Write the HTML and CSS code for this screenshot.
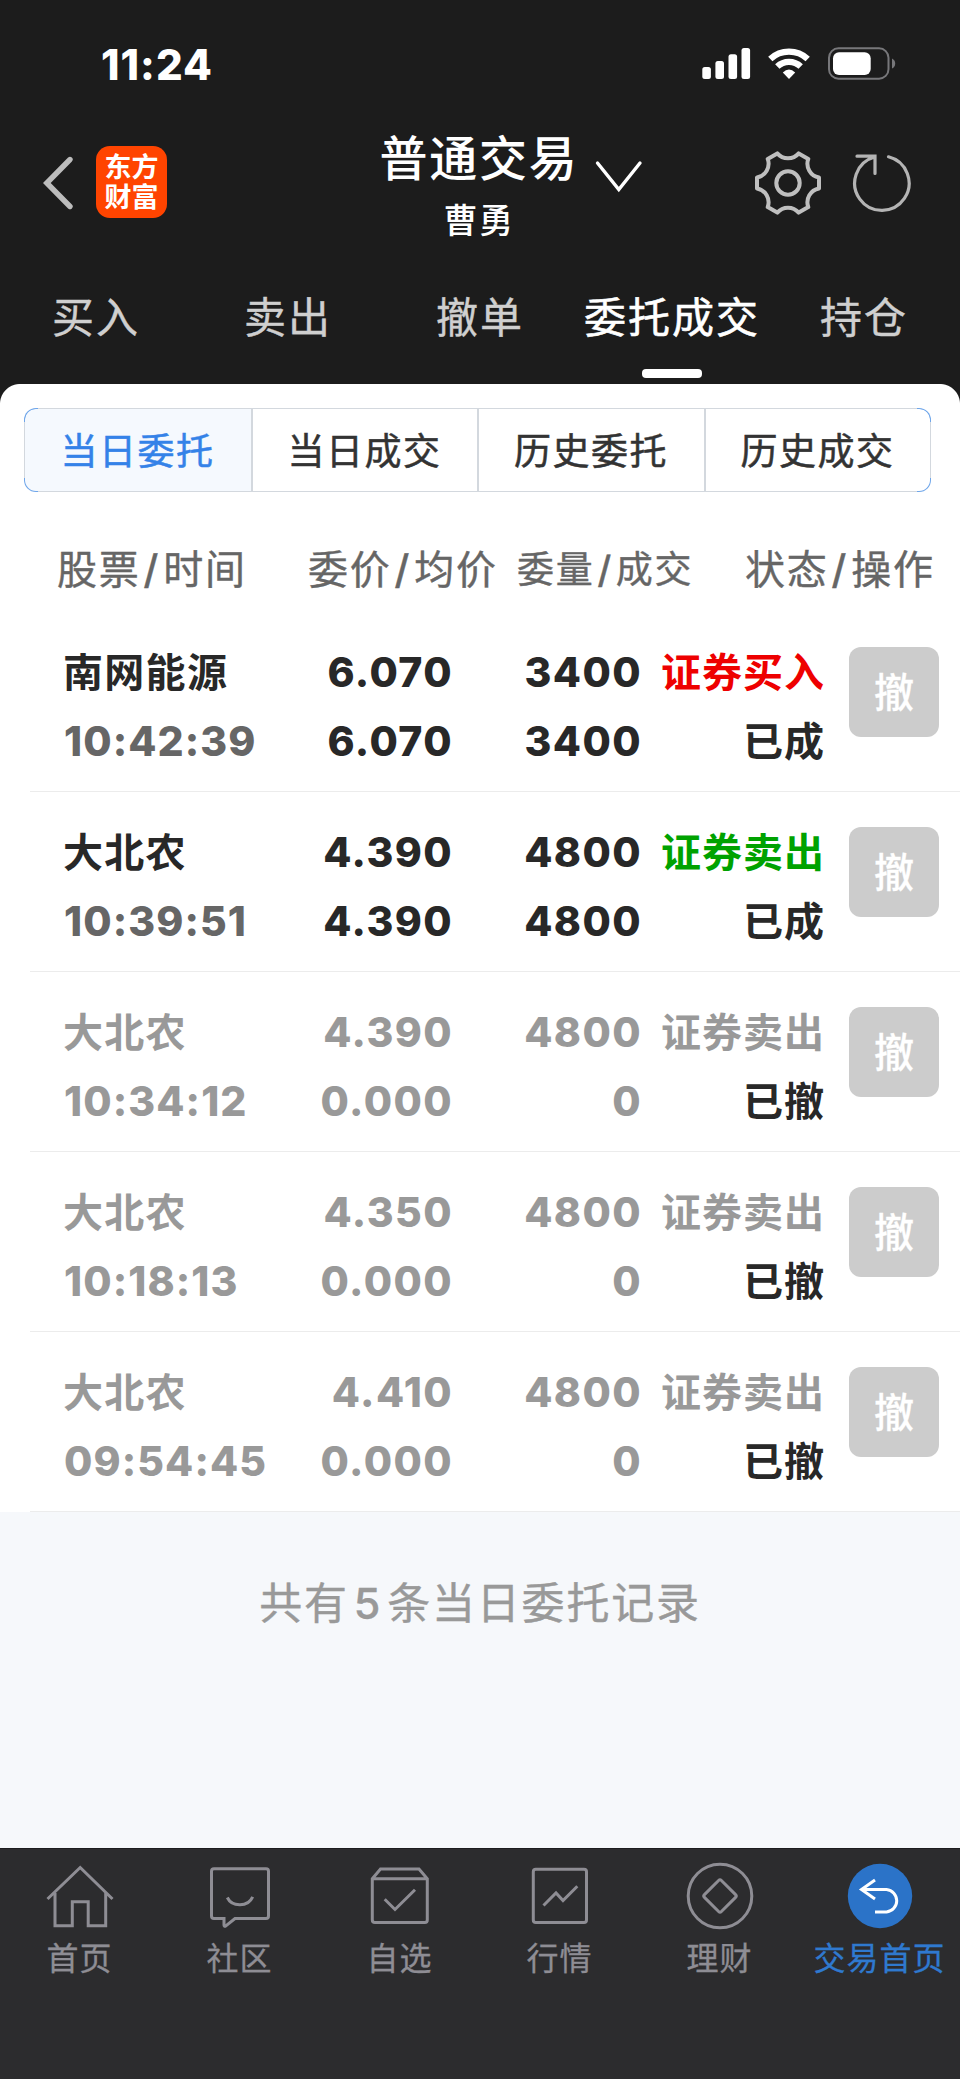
FILE: index.html
```html
<!DOCTYPE html>
<html lang="zh-CN">
<head>
<meta charset="utf-8">
<title>普通交易</title>
<link rel="stylesheet" href="styles.css">
</head>
<body>
<div class="app">
  <header class="top">
    <div class="status">
      <span class="clock">11:24</span>
      <svg class="status-icons" width="200" height="40" viewBox="700 43 200 40">
        <g fill="#fff">
          <rect x="702.3" y="67" width="8.6" height="12" rx="2.5"/>
          <rect x="715.4" y="61" width="8.6" height="18" rx="2.5"/>
          <rect x="728.5" y="54.300" width="8.600" height="24.700" rx="2.5"/>
          <rect x="741.500" y="48" width="8.600" height="31" rx="2.5"/>
          <path d="M782.800 72.600Q789 66.300 795.200 72.600L789 79Z"/>
          <rect x="833" y="52.300" width="37.700" height="22.600" rx="6"/>
        </g>
        <path d="M770.300 59A27.500 27.500 0 0 1 807.700 59M777.300 66.500A17 17 0 0 1 800.700 66.500" fill="none" stroke="#fff" stroke-width="6.300"/>
        <rect x="829" y="48.300" width="59.500" height="30.400" rx="9.500" fill="none" stroke="#77777a" stroke-width="2"/>
        <path d="M892 58.500Q895.200 60 895.200 63.500Q895.200 67 892 68.500Z" fill="#77777a"/>
      </svg>
    </div>
    <div class="titlebar">
      <svg class="back" width="32" height="60" viewBox="42 153 32 60"><path d="M70 159.500L46.800 183L70 206.500" fill="none" stroke="#bcbcbc" stroke-width="5.400" stroke-linecap="round"/></svg>
      <div class="logo"><span>东方</span><span>财富</span></div>
      <div class="titles">
        <div class="title">普通交易</div>
        <div class="user">曹勇</div>
      </div>
      <svg class="down" width="50" height="34" viewBox="594 160 50 34"><path d="M597.500 163L618.800 189.500L640 163" fill="none" stroke="#fff" stroke-width="3.400" stroke-linecap="round"/></svg>
      <svg class="gear" width="70" height="70" viewBox="-35 -35 70 70"><g fill="none" stroke="#bfbfbf" stroke-width="4" stroke-linejoin="round"><path d="M31 -5.500L31 5.500A14 14 0 0 0 20.300 24.100L10.700 29.600A14 14 0 0 0 -10.700 29.600L-20.300 24.100A14 14 0 0 0 -31 5.500L-31 -5.500A14 14 0 0 0 -20.300 -24.100L-10.700 -29.600A14 14 0 0 0 10.700 -29.600L20.300 -24.100A14 14 0 0 0 31 -5.500Z"/><circle r="11.700"/></g></svg>
      <svg class="refresh" width="64" height="64" viewBox="850 151 64 64"><path d="M888.500 156.800A27.200 27.200 0 1 1 874.500 157M857 156.200H875V173.500" fill="none" stroke="#b4b4b4" stroke-width="3.200" stroke-linecap="round"/></svg>
    </div>
    <nav class="tabs">
      <span class="tab">买入</span>
      <span class="tab">卖出</span>
      <span class="tab">撤单</span>
      <span class="tab tab-on">委托成交</span>
      <span class="tab">持仓</span>
    </nav>
  </header>
  <main class="panel">
    <div class="segments">
      <span class="seg seg-on">当日委托</span>
      <span class="seg">当日成交</span>
      <span class="seg">历史委托</span>
      <span class="seg">历史成交</span>
    </div>
    <div class="head">
      <span class="h-name">股票<i>/</i>时间</span>
      <span class="h-price">委价<i>/</i>均价</span>
      <span class="h-qty">委量<i>/</i>成交</span>
      <span class="h-state">状态<i>/</i>操作</span>
    </div>
    <div class="row">
      <div class="name"><b>南网能源</b><time>10:42:39</time></div>
      <div class="num"><b>6.070</b><b>6.070</b></div>
      <div class="num"><b>3400</b><b>3400</b></div>
      <div class="state"><b class="buy">证券买入</b><b>已成</b></div>
      <span class="cancel">撤</span>
    </div>
    <div class="row">
      <div class="name"><b>大北农</b><time>10:39:51</time></div>
      <div class="num"><b>4.390</b><b>4.390</b></div>
      <div class="num"><b>4800</b><b>4800</b></div>
      <div class="state"><b class="sell">证券卖出</b><b>已成</b></div>
      <span class="cancel">撤</span>
    </div>
    <div class="row row-off">
      <div class="name"><b>大北农</b><time>10:34:12</time></div>
      <div class="num"><b>4.390</b><b>0.000</b></div>
      <div class="num"><b>4800</b><b>0</b></div>
      <div class="state"><b class="off">证券卖出</b><b>已撤</b></div>
      <span class="cancel">撤</span>
    </div>
    <div class="row row-off">
      <div class="name"><b>大北农</b><time>10:18:13</time></div>
      <div class="num"><b>4.350</b><b>0.000</b></div>
      <div class="num"><b>4800</b><b>0</b></div>
      <div class="state"><b class="off">证券卖出</b><b>已撤</b></div>
      <span class="cancel">撤</span>
    </div>
    <div class="row row-off">
      <div class="name"><b>大北农</b><time>09:54:45</time></div>
      <div class="num"><b>4.410</b><b>0.000</b></div>
      <div class="num"><b>4800</b><b>0</b></div>
      <div class="state"><b class="off">证券卖出</b><b>已撤</b></div>
      <span class="cancel">撤</span>
    </div>
  </main>
  <p class="summary">共有<i>5</i>条当日委托记录</p>
  <nav class="dock">
    <div class="item">
      <svg width="80" height="74" viewBox="40 1859 80 74"><path d="M47.500 1899L80.200 1867.500L112.500 1899M55 1893V1925.700H72.300V1901.700H88.200V1925.700H105.700V1893"/></svg>
      <span>首页</span>
    </div>
    <div class="item">
      <svg width="80" height="74" viewBox="200 1859 80 74"><path d="M214 1868.800H266Q268.500 1868.800 268.500 1871.300V1916Q268.500 1918.500 266 1918.500H235L225.500 1926.200Q224 1926.500 224 1925V1918.500H214Q211.500 1918.500 211.500 1916V1871.300Q211.500 1868.800 214 1868.800ZM227.300 1897.500C232 1907.300 248 1907.300 252.700 1896.800"/></svg>
      <span>社区</span>
    </div>
    <div class="item">
      <svg width="80" height="74" viewBox="360 1859 80 74"><path d="M372.300 1878.700L380.500 1869H419L427.300 1878.700V1920Q427.300 1922.500 424.800 1922.500H375Q372.300 1922.500 372.300 1920ZM372.300 1878.700H427.300M384.700 1899.300L395 1909.500L415 1889.700"/></svg>
      <span>自选</span>
    </div>
    <div class="item">
      <svg width="80" height="74" viewBox="520 1859 80 74"><rect x="533.300" y="1869.300" width="53.200" height="53.200" rx="2.500"/><path d="M543.500 1905.500L556 1893L563 1900.500L577.300 1886.300"/></svg>
      <span>行情</span>
    </div>
    <div class="item">
      <svg width="80" height="74" viewBox="680 1859 80 74"><circle cx="720" cy="1896" r="31.800"/><rect x="708" y="1884" width="24" height="24" rx="2" transform="rotate(45 720 1896)"/></svg>
      <span>理财</span>
    </div>
    <div class="item item-on">
      <svg width="80" height="74" viewBox="840 1859 80 74"><circle class="disc" cx="880" cy="1896" r="32.200"/><path d="M875 1880L861.500 1889.500L875 1899M861.500 1889.500H886.500A11.300 11.300 0 0 1 886.500 1912H875"/></svg>
      <span>交易首页</span>
    </div>
  </nav>
</div>
</body>
</html>
```
FILE: styles.css
```css
* { box-sizing: border-box; }
body {
  margin: 0;
  background: #1c1c1c;
  font-family: Inter, "Noto Sans CJK SC", sans-serif;
}
i { font-style: normal; }
svg { display: block; flex: none; }
.app {
  width: 960px;
  height: 2079px;
  display: flex;
  flex-direction: column;
  background: #f6f8fb;
  overflow: hidden;
}
.top { height: 384px; background: #1c1c1c; color: #fff; }

.status {
  height: 126px;
  padding: 43px 60px 0 101px;
  display: flex;
  justify-content: space-between;
}
.clock { font-size: 42px; font-weight: 800; line-height: 43px; letter-spacing: 1px; font-optical-sizing: none; }

.titlebar {
  height: 132px;
  display: flex;
  align-items: flex-start;
}
.back { margin: 27px 22px 0 42px; }
.logo {
  width: 71px;
  height: 72px;
  margin-top: 20px;
  padding-top: 7px;
  border-radius: 14px;
  background: #ff4400;
  display: flex;
  flex-direction: column;
  align-items: center;
  font-size: 27px;
  font-weight: 700;
  line-height: 30px;
}
.titles {
  width: 200px;
  margin-left: 212px;
  display: flex;
  flex-direction: column;
  align-items: center;
  white-space: nowrap;
}
.title { font-size: 48px; font-weight: 500; line-height: 66px; letter-spacing: 1.800px; }
.user { padding-top: 1px; font-size: 34px; font-weight: 500; line-height: 56px; letter-spacing: 1.500px; }
.down { margin: 34px 0 0 15px; }
.gear { margin: 22px 0 0 109px; }
.refresh { margin: 25px 0 0 27px; }

.tabs { height: 126px; display: flex; }
.tab {
  width: 192px;
  text-align: center;
  font-size: 42px;
  line-height: 120px;
  letter-spacing: 2px;
  color: #cfcfcf;
  -webkit-text-stroke: 0.4px;
}
.tab-on { color: #fff; -webkit-text-stroke: 0.6px; }
.tab-on::after {
  content: "";
  display: block;
  width: 60px;
  height: 9px;
  margin: -9px auto 0;
  border-radius: 4px;
  background: #fff;
}

.panel {
  height: 1128px;
  background:
    radial-gradient(circle at 20px 20px, #fff 19.500px, #1c1c1c 20.500px) 0 0 / 20px 20px no-repeat,
    radial-gradient(circle at 0 20px, #fff 19.500px, #1c1c1c 20.500px) 100% 0 / 20px 20px no-repeat,
    #fff;
  padding-top: 24px;
}
/* grey outline with blue corners */
.segments {
  height: 84px;
  margin: 0 29px 0 24px;
  border: 1.500px solid transparent;
  border-radius: 12px;
  display: grid;
  grid-template-columns: 226px 226px 227px 1fr;
  overflow: hidden;
  background:
    radial-gradient(circle at 0 0, #6fa6ea 14px, transparent 14px) 0 0 / 14px 14px no-repeat border-box,
    radial-gradient(circle at 100% 0, #6fa6ea 14px, transparent 14px) 100% 0 / 14px 14px no-repeat border-box,
    radial-gradient(circle at 0 100%, #6fa6ea 14px, transparent 14px) 0 100% / 14px 14px no-repeat border-box,
    radial-gradient(circle at 100% 100%, #6fa6ea 14px, transparent 14px) 100% 100% / 14px 14px no-repeat border-box,
    linear-gradient(#d3d8de, #d3d8de) border-box;
}
.seg {
  padding-right: 1px;
  background: #fff;
  text-align: center;
  font-size: 37px;
  line-height: 85px;
  letter-spacing: 1.500px;
  color: #333;
  border-left: 2px solid #d3d8de;
  -webkit-text-stroke: 0.5px;
}
.seg-on { color: #3482e8; background: #f5f9fe; border-left: 0; border-radius: 10px 0 0 10px; }
.seg:last-child { border-radius: 0 10px 10px 0; }

.head {
  height: 120px;
  padding-top: 41px;
  display: grid;
  grid-template-columns: 308px 209px 228px 1fr;
  font-size: 40px;
  line-height: 74px;
  letter-spacing: 1.800px;
  color: #666;
  white-space: nowrap;
  -webkit-text-stroke: 0.4px;
}
.head i { margin: 0 3px; font-weight: 500; }
.h-name { padding-left: 57px; }
.h-qty { font-size: 37px; letter-spacing: 1.700px; }

.row {
  height: 180px;
  margin-left: 30px;
  padding: 26px 21px 0 33px;
  border-bottom: 1px solid #ececec;
  display: grid;
  grid-template-columns: 231px 159px 189px 183px 90px;
  font-size: 40px;
  line-height: 69px;
  letter-spacing: 1.300px;
  color: #282828;
  white-space: nowrap;
}
.row b, .row time { display: block; font-weight: 700; }
.row time { padding-left: 1px; font-size: 41px; font-weight: 800; color: #666; letter-spacing: 1.100px; font-optical-sizing: none; }
.num { text-align: right; font-size: 41px; letter-spacing: 1.400px; font-optical-sizing: none; }
.num b { font-weight: 800; }
.state { text-align: right; letter-spacing: 1px; }
.buy { color: #ee0000; }
.sell { color: #00a200; }
.row-off .name, .row-off .num, .row-off time, .off { color: #999; }
.cancel {
  width: 90px;
  height: 90px;
  margin: 9px 0 0 24px;
  border-radius: 12px;
  background: #ccc;
  color: #fff;
  text-align: center;
  font-size: 40px;
  font-weight: 500;
  line-height: 92px;
  letter-spacing: 0;
  -webkit-text-stroke: 0.3px;
}

.summary {
  margin: 0;
  flex: 1;
  padding-top: 56px;
  text-align: center;
  font-size: 43px;
  line-height: 70px;
  letter-spacing: 1.800px;
  color: #999;
  -webkit-text-stroke: 0.4px;
}
.summary i { margin: 0 5px; font-weight: 500; }

.dock {
  height: 231px;
  border-top: 1px solid #1c1c1e;
  background: #2c2c2e;
  display: flex;
}
.item {
  width: 160px;
  padding-top: 10px;
  display: flex;
  flex-direction: column;
  align-items: center;
  font-size: 32px;
  line-height: 52px;
  letter-spacing: 1px;
  color: #8e8d94;
}
.item span { padding-right: 1px; -webkit-text-stroke: 0.3px; }
.item svg { fill: none; stroke: #8e8d94; stroke-width: 3px; }
.item-on { color: #2f79cf; }
.item-on svg { stroke: #fff; }
.item-on .disc { fill: #2b73c8; stroke: none; }
```
